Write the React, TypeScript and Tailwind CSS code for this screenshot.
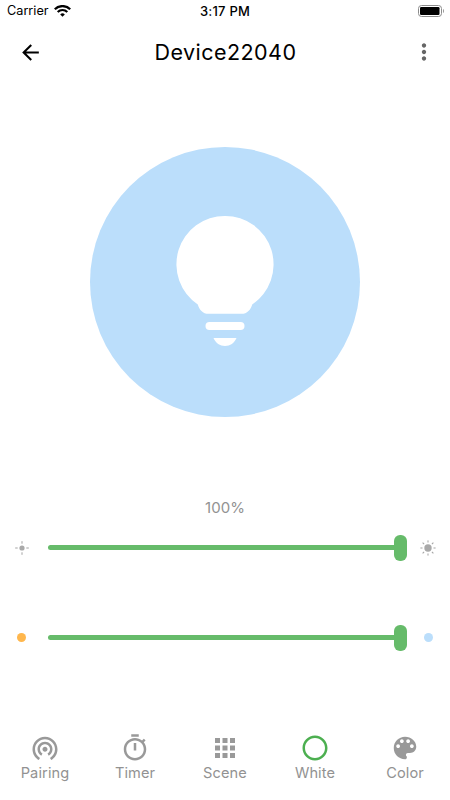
import { ReactNode } from "react";
import clsx from "clsx";

const Icon = ({ size, d, className }: { size: number; d: string; className?: string }) => (
  <svg width={size} height={size} viewBox="0 0 24 24" fill="currentColor" className={className}>
    <path d={d} />
  </svg>
);

const paths = {
  back: "M20 11H7.83l5.59-5.59L12 4l-8 8 8 8 1.41-1.41L7.83 13H20v-2z",
  more: "M12 8c1.1 0 2-.9 2-2s-.9-2-2-2-2 .9-2 2 .9 2 2 2zm0 2c-1.1 0-2 .9-2 2s.9 2 2 2 2-.9 2-2-.9-2-2-2zm0 6c-1.1 0-2 .9-2 2s.9 2 2 2 2-.9 2-2-.9-2-2-2z",
  pairing:
    "M12 11c-1.1 0-2 .9-2 2s.9 2 2 2 2-.9 2-2-.9-2-2-2zm6 2c0-3.31-2.69-6-6-6s-6 2.69-6 6c0 2.22 1.21 4.15 3 5.19l1-1.74c-1.19-.7-2-1.97-2-3.45 0-2.21 1.79-4 4-4s4 1.79 4 4c0 1.48-.81 2.75-2 3.45l1 1.74c1.79-1.04 3-2.97 3-5.19zM12 3C6.48 3 2 7.48 2 13c0 3.7 2.01 6.92 4.99 8.65l1-1.73C5.61 18.53 4 15.96 4 13c0-4.42 3.58-8 8-8s8 3.58 8 8c0 2.96-1.61 5.53-4 6.92l1 1.73c2.99-1.73 5-4.95 5-8.65 0-5.52-4.48-10-10-10z",
  timer:
    "M15 1H9v2h6V1zm-4 13h2V8h-2v6zm8.03-6.61l1.42-1.42c-.43-.51-.9-.99-1.41-1.41l-1.42 1.42C16.07 4.74 14.12 4 12 4c-4.97 0-9 4.03-9 9s4.02 9 9 9 9-4.03 9-9c0-2.12-.74-4.07-1.97-5.61zM12 20c-3.87 0-7-3.13-7-7s3.13-7 7-7 7 3.13 7 7-3.13 7-7 7z",
  scene:
    "M4 8h4V4H4v4zm6 12h4v-4h-4v4zm-6 0h4v-4H4v4zm0-6h4v-4H4v4zm6 0h4v-4h-4v4zm6-10v4h4V4h-4zm-6 4h4V4h-4v4zm6 6h4v-4h-4v4zm0 6h4v-4h-4v4z",
  white:
    "M12 2C6.48 2 2 6.48 2 12s4.48 10 10 10 10-4.48 10-10S17.52 2 12 2zm0 18c-4.42 0-8-3.58-8-8s3.58-8 8-8 8 3.58 8 8-3.58 8-8 8z",
  color:
    "M12 3c-4.97 0-9 4.03-9 9s4.03 9 9 9c.83 0 1.5-.67 1.5-1.5 0-.39-.15-.74-.39-1.01-.23-.26-.38-.61-.38-.99 0-.83.67-1.5 1.5-1.5H16c2.76 0 5-2.24 5-5 0-4.42-4.03-8-9-8zm-5.5 9c-.83 0-1.5-.67-1.5-1.5S5.67 9 6.5 9 8 9.67 8 10.5 7.33 12 6.5 12zm3-4C8.67 8 8 7.33 8 6.5S8.67 5 9.5 5s1.5.67 1.5 1.5S10.33 8 9.5 8zm5 0c-.83 0-1.5-.67-1.5-1.5S13.67 5 14.5 5s1.5.67 1.5 1.5S15.33 8 14.5 8zm3 4c-.83 0-1.5-.67-1.5-1.5S16.67 9 17.5 9s1.5.67 1.5 1.5-.67 1.5-1.5 1.5z",
};

const tabs = [
  { label: "Pairing", icon: paths.pairing },
  { label: "Timer", icon: paths.timer },
  { label: "Scene", icon: paths.scene },
  { label: "White", icon: paths.white, active: true },
  { label: "Color", icon: paths.color },
];

const StatusBar = () => (
  <div className="grid h-[23px] grid-cols-[1fr_60px_1fr] items-center pr-[6px] pl-[7px] text-[13px] leading-none">
    <div className="flex items-center gap-[5px]">
      <span className="text-[12.7px]">Carrier</span>
      <svg width="17" height="12" viewBox="0 0 17 12" fill="none" stroke="#000" strokeWidth="2.2">
        <path d="M.8 4.3a10.7 10.7 0 0 1 15.4 0" />
        <path d="M3.7 7a6.8 6.8 0 0 1 9.6 0" />
        <path d="M8.5 11.7 6.2 9.4a3.3 3.3 0 0 1 4.6 0z" fill="#000" stroke="none" />
      </svg>
    </div>
    <span className="-ml-px text-center font-medium tracking-[0.2px]">3:17 PM</span>
    <svg width="26" height="12" viewBox="0 0 26 12" className="-mt-px justify-self-end">
      <rect x=".5" y=".5" width="23" height="11" rx="3" fill="none" stroke="#8c8c8c" />
      <rect x="2" y="2" width="19.5" height="8" rx="1.2" />
      <path d="M25 4v4c1.2-.6 1.2-3.4 0-4z" fill="#8c8c8c" />
    </svg>
  </div>
);

const Slider = ({ left, right }: { left: ReactNode; right: ReactNode }) => (
  <div className="flex h-[26px] items-center">
    <div className="flex w-[43px] justify-center">{left}</div>
    <div className="ml-[5px] flex w-[359px] items-center">
      <div className="h-[5px] flex-1 rounded-l-full bg-[#66bb6a]" />
      <div className="h-[26px] w-[13.5px] rounded-[6px] bg-[#66bb6a]" />
    </div>
    <div className="flex w-[42px] justify-center">{right}</div>
  </div>
);

const Sun = ({ rays, r, inner, outer }: { rays: number; r: number; inner: number; outer: number }) => (
  <svg width="16" height="16" viewBox="-8 -8 16 16" stroke="#a3a3a3">
    <circle r={r} fill="#a9a9a9" stroke="none" />
    {Array.from({ length: rays }, (_, i) => (
      <path key={i} d={`M0 ${-inner}V${-outer}`} transform={`rotate(${(360 / rays) * i})`} />
    ))}
  </svg>
);

const App = () => {
  return (
    <div className="flex h-[800px] w-[450px] flex-col overflow-hidden bg-white font-['Inter',sans-serif] text-black">
      <StatusBar />

      <header className="flex h-[58px] items-center justify-between pr-[13px] pl-[18px]">
        <Icon size={25} d={paths.back} />
        <h1 className="-ml-[3px] text-[21.5px] font-normal tracking-[0.45px]">Device22040</h1>
        <Icon size={26} d={paths.more} className="text-[#666]" />
      </header>

      <div className="mx-auto mt-[66px] flex size-[270px] shrink-0 justify-center rounded-full bg-[#bbdefb]">
        <svg width="98" height="132" viewBox="0 0 98 132" fill="#fff" className="mt-[68px]">
          <path d="M49 1a48.3 48.3 0 0 1 27.2 88.4C75 94.4 71 98.8 65.5 98.8h-33C27 98.8 23 94.4 21.8 89.4A48.3 48.3 0 0 1 49 1z" />
          <rect x="29.5" y="107" width="39" height="8" rx="4" />
          <path d="M37.5 123h23c-2 5-6.5 8-11.5 8s-9.5-3-11.5-8z" />
        </svg>
      </div>

      <p className="mt-[79px] text-center text-[15px] leading-6 text-[#929292]">100%</p>

      <div className="mt-[14.5px] flex flex-col gap-16">
        <Slider
          left={<Sun rays={4} r={2.6} inner={4.3} outer={6.8} />}
          right={<Sun rays={8} r={3.7} inner={5.5} outer={7.6} />}
        />
        <Slider
          left={<span className="size-[9px] rounded-full bg-[#ffb74d]" />}
          right={<span className="size-[9px] rounded-full bg-[#bbdefb]" />}
        />
      </div>

      <nav className="mt-auto mb-[17px] grid grid-cols-5">
        {tabs.map((tab) => (
          <button key={tab.label} className="flex flex-col items-center text-[#999]">
            <Icon size={30} d={tab.icon} className={clsx(tab.active && "text-[#4caf50]")} />
            <span className="text-[14.6px] leading-5 tracking-[0.1px] text-[#929292]">{tab.label}</span>
          </button>
        ))}
      </nav>
    </div>
  );
};

export default App;
